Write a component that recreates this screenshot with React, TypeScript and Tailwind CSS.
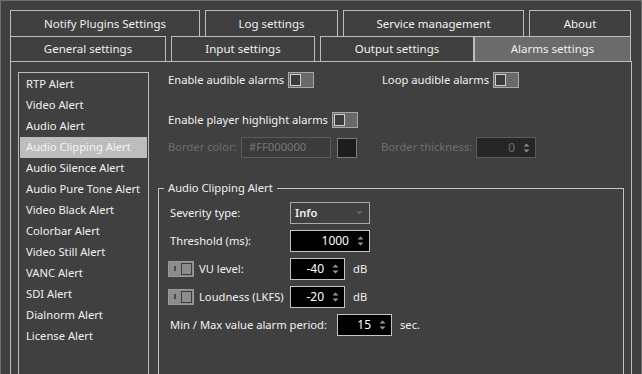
import React from 'react';

const font = { fontFamily: '"Noto Sans", "Liberation Sans", sans-serif' };

const alerts = [
  'RTP Alert',
  'Video Alert',
  'Audio Alert',
  'Audio Clipping Alert',
  'Audio Silence Alert',
  'Audio Pure Tone Alert',
  'Video Black Alert',
  'Colorbar Alert',
  'Video Still Alert',
  'VANC Alert',
  'SDI Alert',
  'Dialnorm Alert',
  'License Alert',
];

function Toggle() {
  return (
    <div className="flex h-[16px] w-[26px] shrink-0 items-center border border-[#a8a8a8] bg-[#6a6a6a] pl-[1px]">
      <div className="h-[12px] w-[11px] border border-[#cfcfcf] bg-[#3c3c3c]" />
    </div>
  );
}

function DisabledToggle() {
  return (
    <div className="flex h-[16px] w-[26px] shrink-0 items-center justify-between border border-[#9a9a9a] bg-[#8c8c8c] pl-[5px] pr-[1px]">
      <div className="h-[5px] w-[2px] bg-[#4a4a4a]" />
      <div className="h-[12px] w-[11px] border border-[#3c3c3c] bg-[#8c8c8c]" />
    </div>
  );
}

function Arrows({ color = '#9a9a9a' }: { color?: string }) {
  return (
    <svg width="7" height="12" viewBox="0 0 7 12" className="shrink-0">
      <path d="M0.5 4.5 L3.5 1.5 L6.5 4.5 Z" fill={color} />
      <path d="M0.5 7.5 L3.5 10.5 L6.5 7.5 Z" fill={color} />
    </svg>
  );
}

function Spin({ value, width }: { value: string; width: string }) {
  return (
    <div className={`flex h-[22px] ${width} shrink-0 items-center justify-end gap-[8px] border border-[#c4c4c4] bg-black pr-[5px] text-[12px] text-white`}>
      <span>{value}</span>
      <Arrows />
    </div>
  );
}

function TopTab({ label, width }: { label: string; width: string }) {
  return (
    <div className={`flex h-[26px] ${width} items-center justify-center border border-b-0 border-[#bdbdbd] text-[11.5px] text-[#f0f0f0]`}>
      {label}
    </div>
  );
}

function Tab({ label, width, active }: { label: string; width: string; active?: boolean }) {
  return (
    <div
      className={`flex h-[25px] ${width} items-center justify-center border border-b-0 border-[#bdbdbd] text-[11.5px] text-[#f0f0f0] ${
        active ? 'bg-[#6b6b6b]' : ''
      }`}
    >
      {label}
    </div>
  );
}

export default function App() {
  return (
    <div
      className="h-[374px] w-[642px] overflow-hidden border border-b-0 border-[#6e6e6e] bg-[#404040] px-[9px] pt-[9px] text-[#f0f0f0]"
      style={font}
    >
      <div className="flex gap-[5px]">
        <TopTab label="Notify Plugins Settings" width="w-[190px]" />
        <TopTab label="Log settings" width="w-[133px]" />
        <TopTab label="Service management" width="w-[181px]" />
        <TopTab label="About" width="w-[102px]" />
      </div>
      <div className="flex">
        <Tab label="General settings" width="w-[156px]" />
        <div className="w-[5px]" />
        <Tab label="Input settings" width="w-[144px]" />
        <div className="w-[5px]" />
        <Tab label="Output settings" width="w-[154px]" />
        <Tab label="Alarms settings" width="w-[157px]" active />
      </div>
      <div className="flex h-[400px] gap-[9px] border border-b-0 border-[#bdbdbd] pl-[7px] pt-[10px]">
        <div className="h-[400px] w-[131px] shrink-0 border border-[#bdbdbd] px-[1px] pt-[1px] text-[11.2px]">
          {alerts.map((a) => (
            <div
              key={a}
              className={`flex h-[21px] items-center whitespace-nowrap pl-[6px] ${
                a === 'Audio Clipping Alert' ? 'bg-[#bdbdbd] text-[#f4f4f4]' : ''
              }`}
            >
              {a}
            </div>
          ))}
        </div>

        <div className="flex w-[466px] flex-col text-[11.2px]">
          <div className="flex h-[16px] items-center pl-[10px]">
            <div className="flex w-[214px] items-center gap-[4px]">
              <span className="whitespace-nowrap">Enable audible alarms</span>
              <Toggle />
            </div>
            <div className="flex items-center gap-[4px]">
              <span className="whitespace-nowrap">Loop audible alarms</span>
              <Toggle />
            </div>
          </div>

          <div className="mt-[24px] flex h-[16px] items-center gap-[4px] pl-[10px]">
            <span className="whitespace-nowrap">Enable player highlight alarms</span>
            <Toggle />
          </div>

          <div className="mt-[9px] flex h-[21px] items-center pl-[10px] text-[#6e6e6e]">
            <span className="w-[73px] whitespace-nowrap">Border color:</span>
            <div className="flex h-[21px] w-[90px] items-center border border-[#5c5c5c] bg-[#3b3b3b] pl-[7px] text-[#777777]">
              #FF000000
            </div>
            <div className="ml-[6px] h-[20px] w-[20px] border border-[#7a7a7a] bg-[#1d1d1d]" />
            <span className="ml-[24px] w-[95px] whitespace-nowrap">Border thickness:</span>
            <div className="flex h-[21px] w-[60px] items-center justify-end gap-[8px] border border-[#5c5c5c] bg-[#262626] pr-[5px] text-[12px] text-[#6e6e6e]">
              <span>0</span>
              <Arrows color="#8a8a8a" />
            </div>
          </div>

          <div className="relative mt-[30px] h-[300px] border border-b-0 border-[#c4c4c4] pl-[9px] pt-[13px]">
            <span className="absolute left-[5px] top-[-10px] bg-[#404040] px-[4px] leading-[18px]">
              Audio Clipping Alert
            </span>
            <div className="flex flex-col gap-[6px]">
              <div className="flex h-[22px] items-center">
                <span className="w-[122px] pl-[2px]">Severity type:</span>
                <div className="flex h-[22px] w-[80px] items-center justify-between border border-[#a8a8a8] pl-[4px] pr-[6px]">
                  <span className="font-semibold">Info</span>
                  <svg width="7" height="4" viewBox="0 0 7 4">
                    <path d="M0 0 L7 0 L3.5 4 Z" fill="#5e5e5e" />
                  </svg>
                </div>
              </div>
              <div className="flex h-[22px] items-center">
                <span className="w-[122px] pl-[2px]">Threshold (ms):</span>
                <Spin value="1000" width="w-[80px]" />
              </div>
              <div className="flex h-[22px] items-center">
                <div className="flex w-[122px] shrink-0 items-center gap-[5px]">
                  <DisabledToggle />
                  <span>VU level:</span>
                </div>
                <Spin value="-40" width="w-[55px]" />
                <span className="ml-[8px]">dB</span>
              </div>
              <div className="flex h-[22px] items-center">
                <div className="flex w-[122px] shrink-0 items-center gap-[5px]">
                  <DisabledToggle />
                  <span className="whitespace-nowrap">Loudness (LKFS)</span>
                </div>
                <Spin value="-20" width="w-[55px]" />
                <span className="ml-[8px]">dB</span>
              </div>
              <div className="flex h-[22px] items-center">
                <span className="w-[169px] shrink-0 whitespace-nowrap pl-[2px]">Min / Max value alarm period:</span>
                <Spin value="15" width="w-[55px]" />
                <span className="ml-[8px]">sec.</span>
              </div>
            </div>
          </div>
        </div>
      </div>
    </div>
  );
}
